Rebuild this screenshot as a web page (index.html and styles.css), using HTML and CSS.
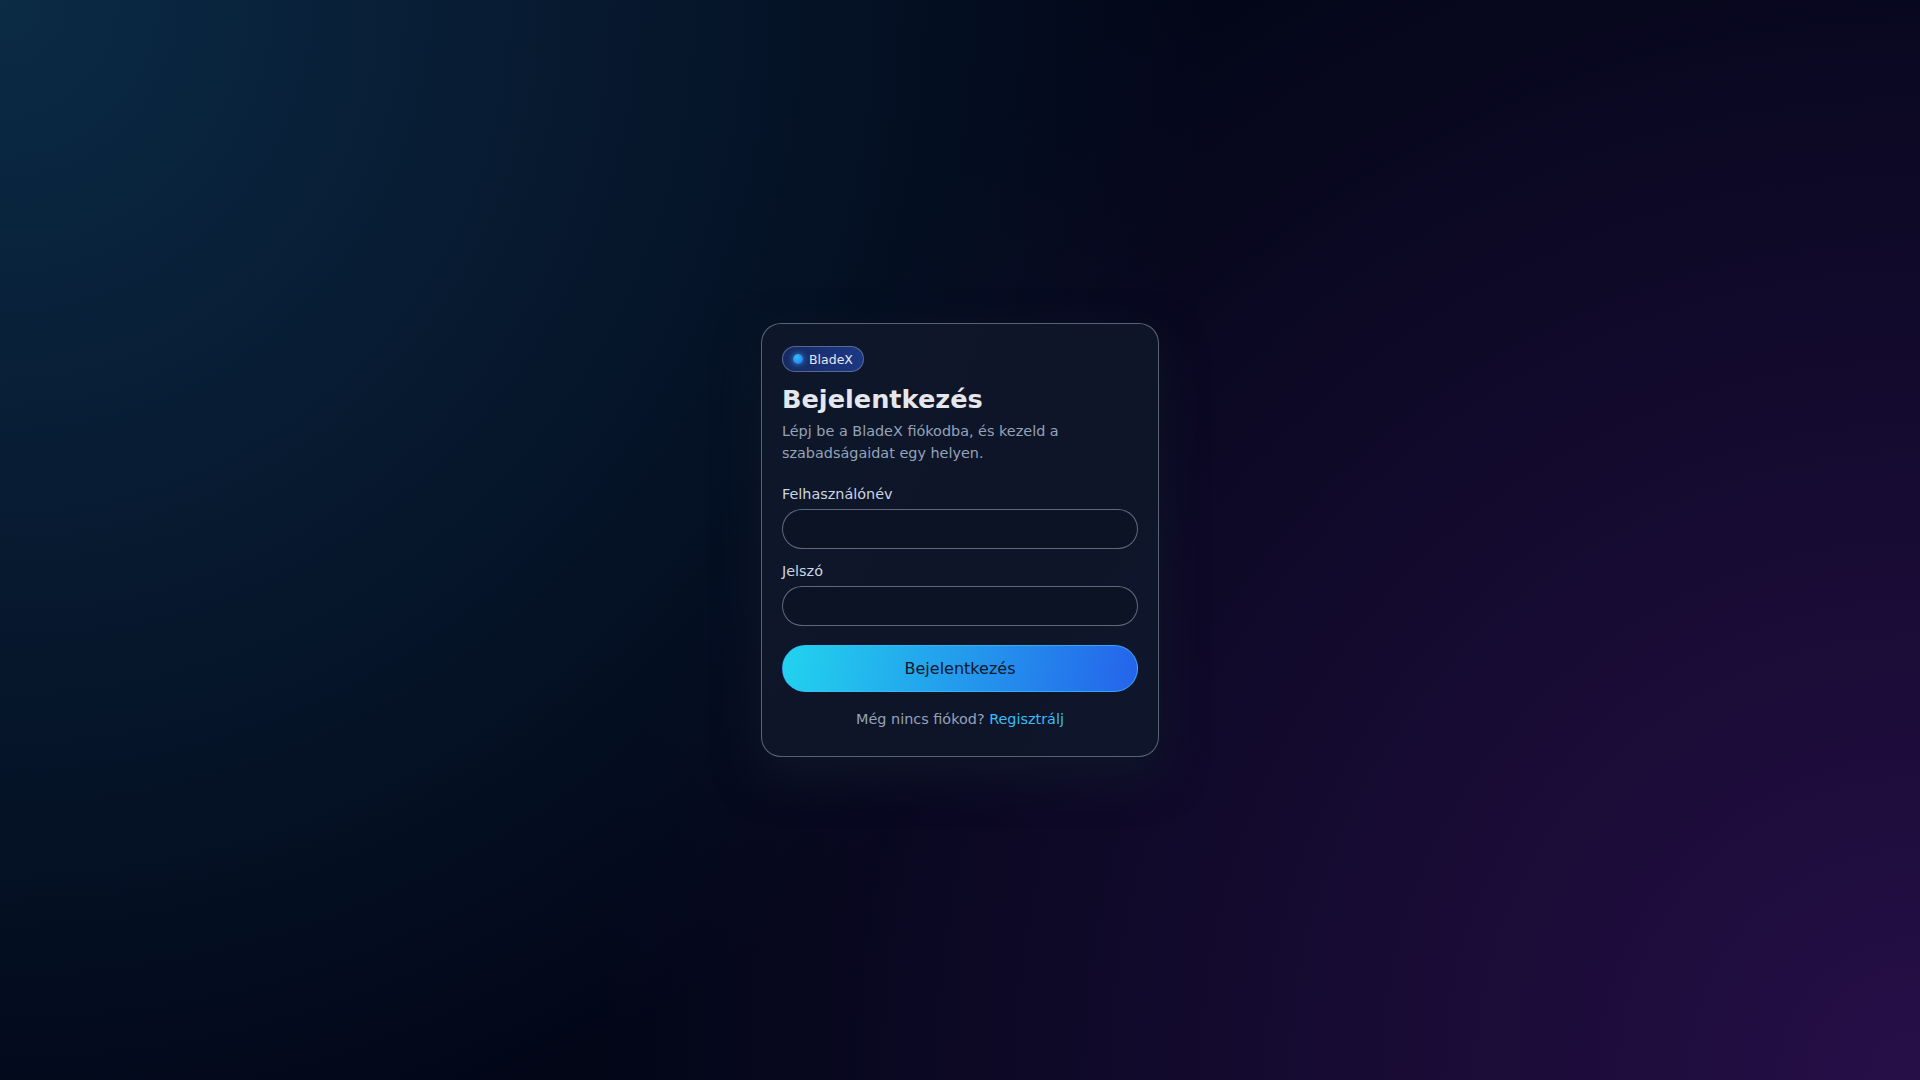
FILE: index.html
```html
<!DOCTYPE html>
<html lang="hu">
<head>
<meta charset="utf-8">
<title>Bejelentkezés – BladeX</title>
<link rel="stylesheet" href="styles.css">
</head>
<body>
<main class="page">
  <section class="card">
    <div class="badge"><span class="badge-dot"></span><span class="badge-text">BladeX</span></div>
    <h1 class="title">Bejelentkezés</h1>
    <p class="subtitle">Lépj be a BladeX fiókodba, és kezeld a szabadságaidat egy helyen.</p>
    <form class="form">
      <label class="field">
        <span class="label">Felhasználónév</span>
        <input class="input" type="text">
      </label>
      <label class="field">
        <span class="label">Jelszó</span>
        <input class="input" type="password">
      </label>
      <button class="submit" type="button">Bejelentkezés</button>
    </form>
    <p class="footer">Még nincs fiókod? <a class="link" href="#">Regisztrálj</a></p>
  </section>
</main>
</body>
</html>
```
FILE: styles.css
```css
* { box-sizing: border-box; }
html, body { margin: 0; height: 100%; }
body {
  font-family: "DejaVu Sans", "Noto Sans", sans-serif;
  color: #e5e7eb;
  background:
    radial-gradient(circle at 0% 0%, rgba(14, 55, 85, 0.75) 0%, rgba(14, 55, 85, 0) 55%),
    radial-gradient(circle at 100% 100%, rgba(45, 16, 80, 0.85) 0%, rgba(45, 16, 80, 0) 60%),
    #020617;
}
.page {
  min-height: 100vh;
  display: flex;
  align-items: center;
  justify-content: center;
}
.card {
  width: 398px;
  padding: 22px 20px 29px;
  border: 1px solid rgba(148, 163, 184, 0.55);
  border-radius: 20px;
  background: rgba(15, 23, 42, 0.92);
  box-shadow: 0 18px 45px rgba(15, 23, 42, 0.9);
}
.badge {
  display: inline-flex;
  align-items: center;
  gap: 6px;
  height: 26px;
  padding: 0 10px;
  border: 1px solid rgba(148, 163, 184, 0.5);
  border-radius: 999px;
  background: linear-gradient(90deg, rgba(23, 44, 105, 0.9), rgba(30, 58, 138, 0.95));
}
.badge-dot {
  width: 10px;
  height: 10px;
  border-radius: 50%;
  background: radial-gradient(circle at 40% 35%, #38bdf8, #1d6ef0);
  box-shadow: 0 0 6px rgba(56, 189, 248, 0.8);
}
.badge-text {
  font-size: 12.5px;
  color: #e2e8f0;
}
.title {
  margin: 12px 0 6px;
  font-size: 25.6px;
  font-weight: 700;
  line-height: normal;
  color: #e5e7eb;
}
.subtitle {
  margin: 0 0 22px;
  font-size: 14.4px;
  line-height: 22px;
  color: #94a3b8;
}
.form {
  display: flex;
  flex-direction: column;
}
.field {
  display: flex;
  flex-direction: column;
  gap: 7px;
  margin-bottom: 14px;
}
.field + .field { margin-bottom: 19px; }
.label {
  font-size: 14.4px;
  color: #cbd5e1;
}
.input {
  height: 40px;
  width: 100%;
  padding: 0 14px;
  border: 1px solid rgba(148, 163, 184, 0.6);
  border-radius: 999px;
  background: rgba(11, 18, 34, 0.7);
  color: #e5e7eb;
  font: inherit;
  font-size: 14.4px;
  outline: none;
}
.submit {
  width: 100%;
  height: 47px;
  border: 1px solid rgba(56, 189, 248, 0.7);
  border-radius: 999px;
  background: linear-gradient(100deg, #22d3ee 0%, #2563eb 100%);
  color: #0f172a;
  font-family: inherit;
  font-size: 16px;
  cursor: pointer;
}
.footer {
  margin: 19px 0 0;
  text-align: center;
  font-size: 14.4px;
  color: #94a3b8;
}
.link {
  color: #38bdf8;
  text-decoration: none;
}
```
